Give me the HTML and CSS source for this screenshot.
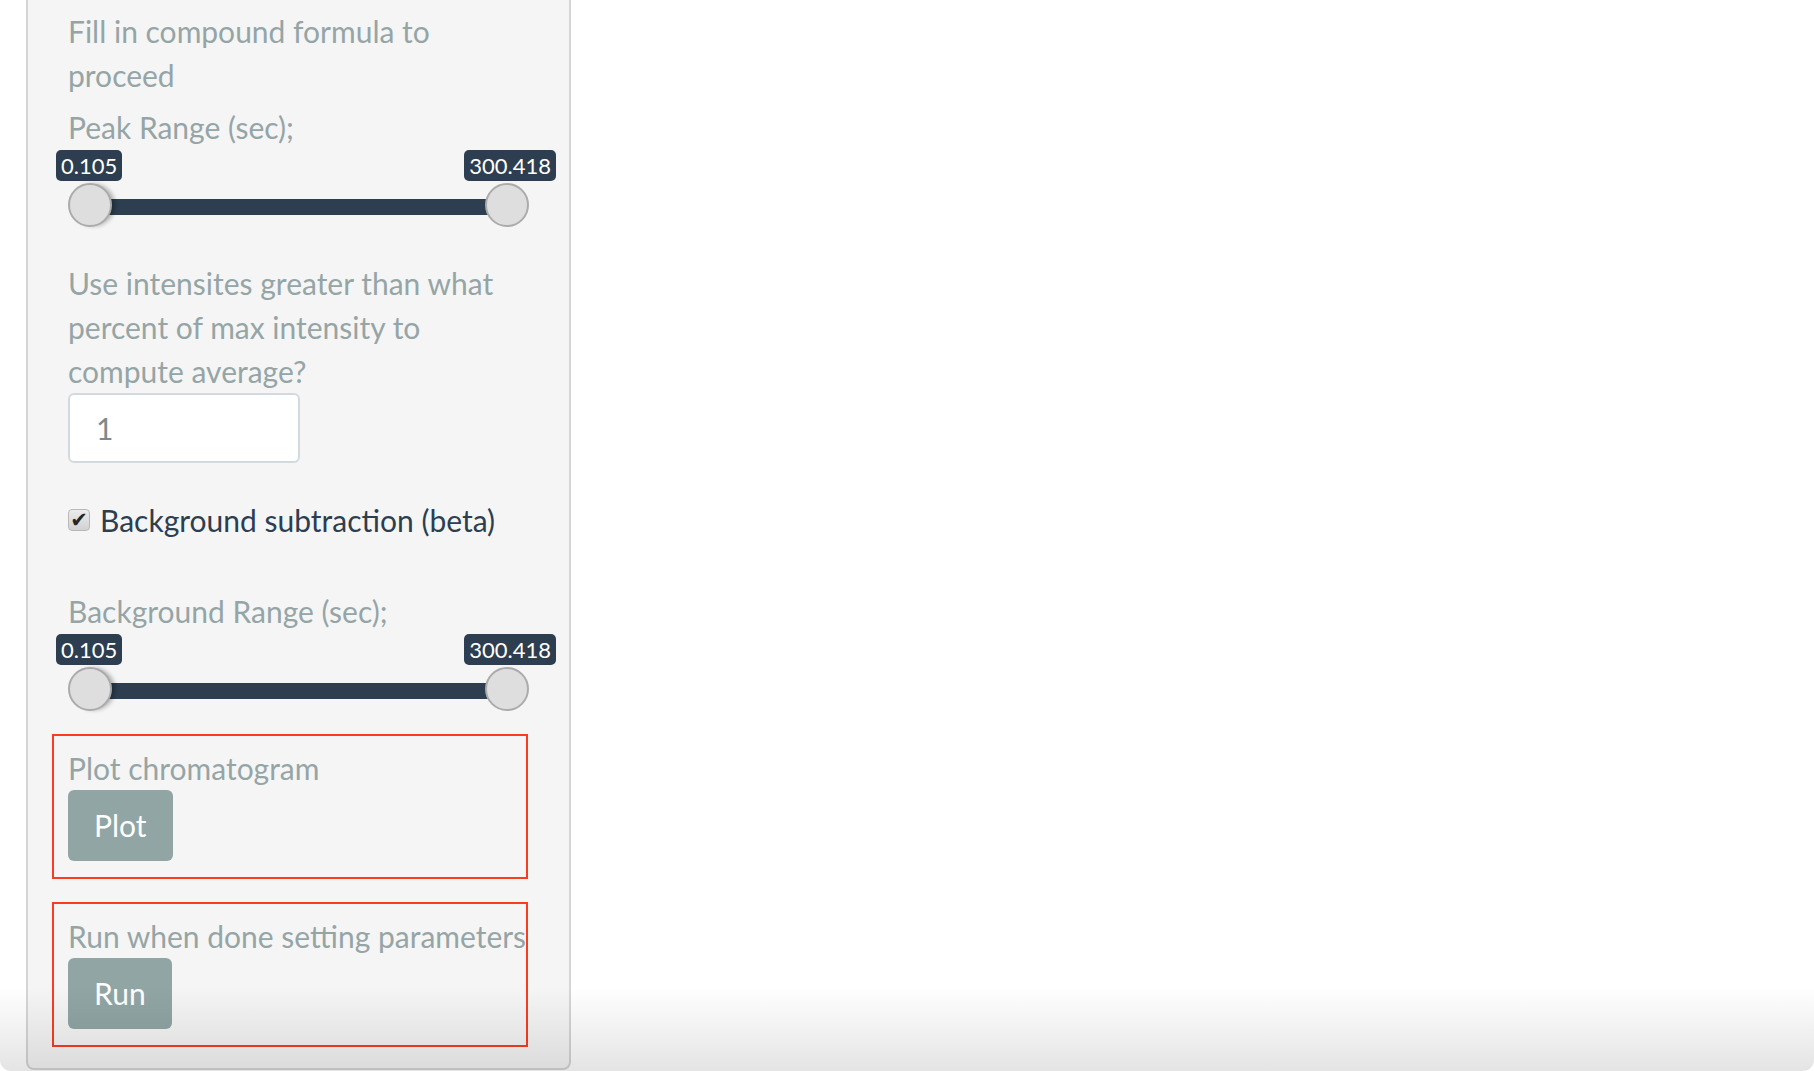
FILE: index.html
```html
<!DOCTYPE html>
<html lang="en">
<head>
<meta charset="utf-8">
<title>Chromatogram parameters</title>
<link rel="stylesheet" href="styles.css">
</head>
<body>
<div class="window">
  <aside class="panel">
    <p class="help">Fill in compound formula to proceed</p>

    <div class="group group-peak">
      <label class="label">Peak Range (sec);</label>
      <div class="slider">
        <div class="tips">
          <span class="tip">0.105</span>
          <span class="tip">300.418</span>
        </div>
        <div class="track">
          <span class="thumb thumb-from"></span>
          <span class="thumb"></span>
        </div>
      </div>
    </div>

    <div class="group group-pct">
      <label class="label">Use intensites greater than what percent of max intensity to compute average?</label>
      <input class="num" type="text" value="1">
    </div>

    <div class="check">
      <span class="box">&#10004;</span>
      <span class="check-text">Background subtraction (beta)</span>
    </div>

    <div class="group group-bg">
      <label class="label">Background Range (sec);</label>
      <div class="slider">
        <div class="tips">
          <span class="tip">0.105</span>
          <span class="tip">300.418</span>
        </div>
        <div class="track">
          <span class="thumb thumb-from"></span>
          <span class="thumb"></span>
        </div>
      </div>
    </div>

    <div class="mark mark-plot">
      <div class="label">Plot chromatogram</div>
      <button class="btn btn-plot">Plot</button>
    </div>

    <div class="mark mark-run">
      <div class="label nowrap">Run when done setting parameters</div>
      <button class="btn btn-run">Run</button>
    </div>
  </aside>
  <div class="fade"></div>
</div>
</body>
</html>
```

FILE: styles.css
```css
html, body {
  margin: 0;
  padding: 0;
  background: #ffffff;
}

body {
  font-family: Lato, "Open Sans", "Liberation Sans", sans-serif;
  font-size: 30px;
  line-height: 44px;
  color: #95a5a6;
}

.window {
  position: relative;
  width: 1814px;
  height: 1071px;
  overflow: hidden;
  background: #ffffff;
  border-radius: 0 0 11px 11px;
}

.fade {
  position: absolute;
  left: 0;
  right: 0;
  bottom: 0;
  height: 85px;
  pointer-events: none;
  background: linear-gradient(rgba(0, 0, 0, 0), rgba(0, 0, 0, 0.105));
}

.panel {
  box-sizing: border-box;
  width: 545px;
  height: 1070px;
  margin-left: 26px;
  padding: 9px 0 0 40px;
  background: #f5f5f5;
  border: 2px solid #d5d5d5;
  border-top: 0;
  border-radius: 0 0 8px 8px;
}

.help {
  margin: 0;
  width: 420px;
}

.label {
  display: block;
}

.nowrap {
  white-space: nowrap;
}

.group-peak {
  margin-top: 8px;
}

.slider {
  width: 461px;
}

.tips {
  display: flex;
  justify-content: space-between;
  margin: 1px -27px 0 -12px;
}

.tip {
  display: block;
  height: 31px;
  padding: 0 5px;
  border-radius: 5px;
  background: #2c3e50;
  color: #ffffff;
  font-size: 22px;
  line-height: 32px;
}

.track {
  display: flex;
  justify-content: space-between;
  margin-top: 2px;
  height: 44px;
  background: linear-gradient(#2c3e50, #2c3e50) no-repeat 22px 16px / calc(100% - 44px) 16px;
}

.thumb {
  box-sizing: border-box;
  width: 44px;
  height: 44px;
  border-radius: 50%;
  background: #dedede;
  border: 2px solid #ababab;
}

.thumb-from {
  box-shadow: 4px 0 4px -1px rgba(0, 0, 0, 0.28);
}

.group-pct {
  margin-top: 34px;
}

.group-pct .label {
  width: 440px;
}

.num {
  display: block;
  box-sizing: border-box;
  width: 232px;
  height: 70px;
  margin: 0;
  padding: 0 0 0 26px;
  border: 2px solid #d2dadd;
  border-radius: 6px;
  background: #ffffff;
  font-family: inherit;
  font-size: 30px;
  color: #7b8a8b;
  outline: none;
}

.check {
  display: flex;
  align-items: center;
  margin-top: 35px;
  height: 44px;
}

.box {
  box-sizing: border-box;
  display: flex;
  align-items: center;
  justify-content: center;
  width: 22px;
  height: 22px;
  border: 1px solid #b8b8b8;
  border-radius: 4px;
  background: linear-gradient(#ececec, #d2d2d2);
  color: #262626;
  font-size: 21px;
  line-height: 1;
  font-family: "DejaVu Sans", sans-serif;
}

.check-text {
  margin-left: 10px;
  color: #2c3e50;
  font-size: 30px;
}

.group-bg {
  margin-top: 47px;
}

.mark {
  box-sizing: border-box;
  width: 476px;
  margin-left: -16px;
  padding: 10px 0 16px 14px;
  border: 2px solid #fb3c1e;
}

.mark-plot {
  margin-top: 23px;
}

.mark-run {
  margin-top: 23px;
}

.btn {
  display: block;
  height: 71px;
  padding: 0 26px;
  border: 0;
  border-radius: 6px;
  background: #91a5a5;
  color: #ffffff;
  font-family: inherit;
  font-size: 30px;
  line-height: 71px;
}
```
